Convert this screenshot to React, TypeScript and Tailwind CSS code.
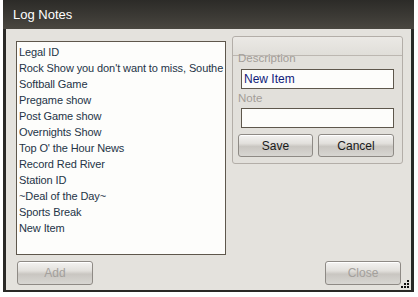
import React from "react";

const items = [
  "Legal ID",
  "Rock Show you don't want to miss, Southe",
  "Softball Game",
  "Pregame show",
  "Post Game show",
  "Overnights Show",
  "Top O' the Hour News",
  "Record Red River",
  "Station ID",
  "~Deal of the Day~",
  "Sports Break",
  "New Item",
];

// glossy winforms-style button
function GlassButton({ label, disabled, className = "" }: { label: string; disabled?: boolean; className?: string }) {
  return (
    <div
      className={`flex items-center justify-center rounded-[3px] border border-[#8e8a85] bg-[linear-gradient(to_bottom,#f4f3f1_0%,#e2e0dc_40%,#c9c6c1_55%,#d8d6d2_100%)] shadow-[inset_0_1px_0_#ffffff] text-[12px] ${disabled ? "text-[#a3a09c]" : "text-[#1a1a1a]"} ${className}`}
    >
      {label}
    </div>
  );
}

export default function App() {
  return (
    <div className="w-[418px] h-[297px] bg-white overflow-hidden font-['Liberation_Sans',Arial,sans-serif]">
      <div className="ml-[3px] w-[411px] h-[292px] flex flex-col relative">
        {/* Title bar */}
        <div className="h-[29px] shrink-0 flex items-center pl-[10px] bg-[linear-gradient(to_bottom,#2c2b28,#3d3b36_60%,#4a4740)] text-white text-[13px]">
          Log Notes
        </div>

        {/* Body */}
        <div className="flex-1 flex flex-col border-x-[3px] border-b-[2px] border-[#2a2926] bg-[#e4e2dd] pl-[10px] pr-[9px]">
          <div className="flex items-start pt-[7px]">
            {/* list box */}
            <div className="mt-[5px] w-[210px] h-[214px] shrink-0 border border-[#5e574c] bg-[#fdfdfb] overflow-hidden pt-[2px] pl-[2px]">
              {items.map((t) => (
                <div key={t} className="h-[16px] leading-[16px] text-[11px] tracking-[-0.1px] text-[#243447] whitespace-nowrap">
                  {t}
                </div>
              ))}
            </div>

            {/* group box */}
            <div className="ml-[6px] w-[171px] h-[128px] shrink-0 rounded-[3px] border border-[#b3aea8] bg-[#e2e0db] flex flex-col">
              <div className="h-[19px] shrink-0 rounded-t-[3px] border-b border-[#bcb7b1] bg-[linear-gradient(to_bottom,#ebe9e5,#e0ded9)]" />
              <div className="flex flex-col pl-[5px] pr-[8px]">
                <div className="text-[11.5px] leading-[13px] -mt-[4px] text-[#a29d98]">Description</div>
                <div className="mt-[4px] ml-[3px] h-[20px] border border-[#5e574c] bg-[#fdfdfb] text-[12px] text-[#10207a] pl-[2px] leading-[18px]">
                  New Item
                </div>
                <div className="mt-[2px] text-[11.5px] leading-[14px] text-[#a29d98]">Note</div>
                <div className="mt-[3px] ml-[3px] h-[20px] border border-[#5e574c] bg-[#fdfdfb]" />
                <div className="mt-[6px] flex gap-[5px]">
                  <GlassButton label="Save" className="w-[75px] h-[23px]" />
                  <GlassButton label="Cancel" className="w-[76px] h-[23px]" />
                </div>
              </div>
            </div>
          </div>

          {/* bottom buttons */}
          <div className="mt-[6px] flex justify-between pl-[1px] pr-[1px]">
            <GlassButton label="Add" disabled className="w-[76px] h-[24px]" />
            <GlassButton label="Close" disabled className="w-[76px] h-[24px]" />
          </div>
        </div>

        {/* resize grip */}
        <svg className="absolute right-[4px] bottom-[3px]" width="9" height="9" viewBox="0 0 9 9">
          <rect x="6" y="0" width="2" height="2" fill="#111" />
          <rect x="3" y="3" width="2" height="2" fill="#111" />
          <rect x="6" y="3" width="2" height="2" fill="#111" />
          <rect x="0" y="6" width="2" height="2" fill="#111" />
          <rect x="3" y="6" width="2" height="2" fill="#111" />
          <rect x="6" y="6" width="2" height="2" fill="#111" />
        </svg>
      </div>
    </div>
  );
}
